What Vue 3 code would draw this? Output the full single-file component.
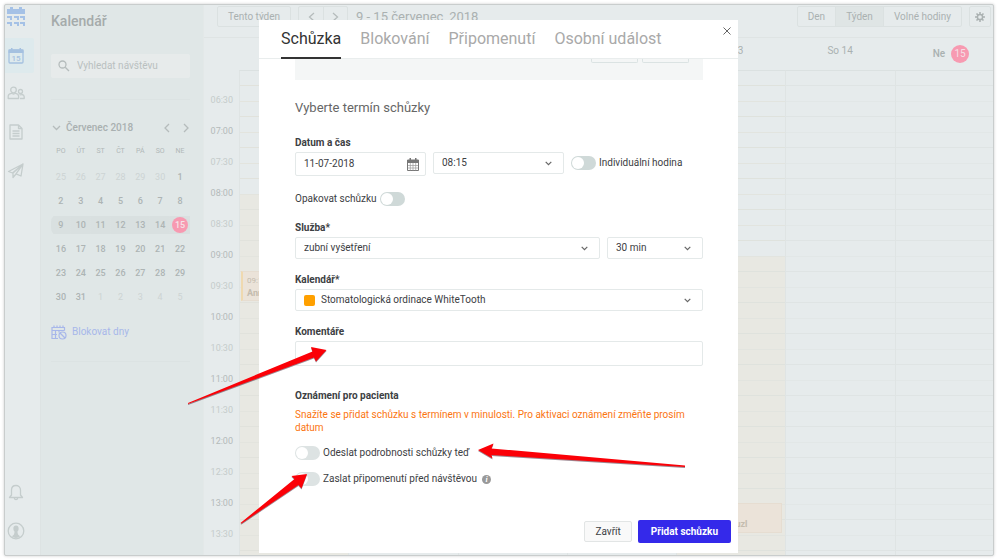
<script setup>
import { ref } from 'vue'

const weekdays = ['PO', 'ÚT', 'ST', 'ČT', 'PÁ', 'SO', 'NE']
const firstCell = new Date(2018, 5, 25)
const weeks = Array.from({ length: 6 }, (_, w) =>
  Array.from({ length: 7 }, (_, d) => {
    const date = new Date(firstCell)
    date.setDate(date.getDate() + w * 7 + d)
    return { day: date.getDate(), outside: date.getMonth() !== 6 }
  })
)

const times = Array.from({ length: 15 }, (_, i) => {
  const minutes = 390 + i * 30
  return {
    label: String(Math.floor(minutes / 60)).padStart(2, '0') + ':' + (minutes % 60 ? '30' : '00'),
    half: minutes % 60 !== 0
  }
})

const days = ['', '', '', '', 'Pá 13', 'So 14']
const tabs = ['Schůzka', 'Blokování', 'Připomenutí', 'Osobní událost']
const activeTab = ref('Schůzka')
const date = ref('11-07-2018')
const comment = ref('')
</script>

<template>
  <div class="page">
    <div class="frame">
      <nav class="rail" aria-label="Menu">
        <a href="#" class="logo" aria-label="Domů">
          <svg width="20" height="20" viewBox="0 0 20 20" fill="#a5c1e6">
            <path d="M1 2h3V0h3v2h6V0h3v2h3v5H1z" />
            <path d="M1 9h5v4H4v-2H1zM8 9h5v4h-2v-2H8zM14 9h5v4h-2v-2h-3zM1 15h5v4H4v-2H1zM8 15h5v4h-2v-2H8zM14 15h5v4h-2v-2h-3z" />
          </svg>
        </a>
        <a href="#" class="rail-item active" aria-label="Kalendář">
          <svg width="18" height="18" viewBox="0 0 18 18">
            <rect x="2" y="3" width="14" height="13" rx="1" fill="none" stroke="#a5c1e0" stroke-width="1.3" />
            <path d="M1.500 2.500h15V6h-15zM4 1h1.500v2H4zM12.500 1H14v2h-1.500z" fill="#a5c1e0" />
            <text x="9" y="14" text-anchor="middle" class="icon-num">15</text>
          </svg>
        </a>
        <a href="#" class="rail-item" aria-label="Klienti">
          <svg width="18" height="18" viewBox="0 0 18 18" class="line">
            <circle cx="6.500" cy="6" r="2.800" />
            <path d="M1.200 14.500v-2.300c0-1.800 1.600-2.600 3.200-2.900 1.200.8 3 .8 4.200 0 1.600.3 3 1.100 3 2.900v2.300z" />
            <circle cx="13.500" cy="7.500" r="2" />
            <path d="M13 14.500h4.200v-1.800c0-1.400-1-2-2.200-2.200-.8.500-1.600.5-2.500 0" />
          </svg>
        </a>
        <a href="#" class="rail-item" aria-label="Dokumenty">
          <svg width="18" height="18" viewBox="0 0 18 18" class="line">
            <path d="M3 2h8.500L15 5.500V16H3z" /><path d="M11.500 2v3.500H15M5.500 8h7M5.500 10.500h7M5.500 13h7" />
          </svg>
        </a>
        <a href="#" class="rail-item" aria-label="Zprávy">
          <svg width="18" height="18" viewBox="0 0 18 18" class="line">
            <path d="M16 2L1.500 9.500l4 1.500L16 2l-2 12-5-2.200L16 2 6 11v4.500L9 12" />
          </svg>
        </a>
        <span class="spacer"></span>
        <a href="#" class="rail-item" aria-label="Upozornění">
          <svg width="18" height="18" viewBox="0 0 18 18" class="line">
            <path d="M2.500 14.500h13l-2-2.500V7c0-6-9-6-9 0v5zM7.300 15c.3 2.200 3.100 2.200 3.400 0" />
          </svg>
        </a>
        <a href="#" class="rail-item last" aria-label="Profil">
          <svg width="18" height="18" viewBox="0 0 18 18">
            <circle cx="9" cy="9" r="7.800" fill="none" stroke="#c5cdcd" stroke-width="1.300" />
            <path d="M9 3.500c-2 0-2.800 1.500-2.600 3.400.1 1.400.7 2.200 1.200 2.900L7 12.500 5 14.300c2 2.300 6 2.300 8 0l-2-1.800-.6-2.700c.5-.7 1.100-1.500 1.200-2.900.2-1.900-.6-3.400-2.600-3.400z" fill="#c5cdcd" />
          </svg>
        </a>
      </nav>

      <aside class="sidebar">
        <h1>Kalendář</h1>
        <label class="search">
          <svg width="12" height="12" viewBox="0 0 12 12"><circle cx="4.500" cy="4.500" r="3.500" /><path d="M7.200 7.200L11 11" /></svg>
          <input type="search" placeholder="Vyhledat návštěvu" aria-label="Vyhledat návštěvu">
        </label>
        <hr>
        <div class="month">
          <svg width="9" height="6" viewBox="0 0 9 6"><path d="M1 1l3.500 3.500L8 1" /></svg>
          <strong>Červenec 2018</strong>
          <button aria-label="Předchozí měsíc"><svg width="6" height="10" viewBox="0 0 6 10"><path d="M5 1L1 5l4 4" /></svg></button>
          <button aria-label="Další měsíc"><svg width="6" height="10" viewBox="0 0 6 10"><path d="M1 1l4 4-4 4" /></svg></button>
        </div>
        <table class="mini">
          <thead><tr><th v-for="d in weekdays" :key="d">{{ d }}</th></tr></thead>
          <tbody>
            <tr v-for="(week, w) in weeks" :key="w" :class="{ current: w === 2 }">
              <td v-for="(c, i) in week" :key="i" :class="{ outside: c.outside }">
                <span :class="{ today: c.day === 15 }">{{ c.day }}</span>
              </td>
            </tr>
          </tbody>
        </table>
        <a href="#" class="block-days">
          <svg width="16" height="15" viewBox="0 0 16 15">
            <path d="M13.500 5.500V2.500H1v11h6M1 5.500h12.500M1 9.500h5M4.500 5.500v8M8 5.500v2M3 .5v2M6 .5v2M9 .5v2M12 .5v2" />
            <circle cx="11.500" cy="10.500" r="3.500" /><path d="M9 8l5 5" />
          </svg>
          Blokovat dny
        </a>
        <hr>
      </aside>

      <main class="main">
        <header class="toolbar">
          <button class="ghost">Tento týden</button>
          <div class="group">
            <button aria-label="Předchozí týden"><svg width="7" height="10" viewBox="0 0 7 10"><path d="M6 1L1.500 5 6 9" /></svg></button>
            <button aria-label="Další týden"><svg width="7" height="10" viewBox="0 0 7 10"><path d="M1 1l4.500 4L1 9" /></svg></button>
          </div>
          <span class="range">9 - 15 červenec, 2018</span>
          <div class="group views">
            <button>Den</button><button class="on">Týden</button><button>Volné hodiny</button>
          </div>
          <button class="ghost gear" aria-label="Nastavení">
            <svg width="10" height="10" viewBox="0 0 10 10"><circle cx="5" cy="5" r="2.600" /><path d="M5 0v2M5 8v2M0 5h2M8 5h2M1.500 1.500l1.400 1.400M7.100 7.100l1.400 1.400M1.500 8.500l1.400-1.400M7.100 2.900l1.400-1.400" /></svg>
          </button>
        </header>
        <div class="day-heads">
          <span></span>
          <span v-for="(d, i) in days" :key="i" class="day-head">{{ d }}</span>
          <span class="day-head now">Ne <b>15</b></span>
        </div>
        <div class="schedule">
          <div class="times">
            <span v-for="t in times" :key="t.label" :class="{ half: t.half }">{{ t.label }}</span>
          </div>
          <div class="col open-eight">
            <div class="event first"><span>09:15</span><strong>Anna</strong></div>
          </div>
          <div class="col"></div>
          <div class="col"></div>
          <div class="col"></div>
          <div class="col open-ten">
            <div class="event second"><strong>Kuzl</strong></div>
          </div>
          <div class="col"></div>
          <div class="col"></div>
        </div>
      </main>
    </div>

    <div class="overlay">
      <section class="dialog" role="dialog" aria-label="Schůzka">
        <header class="tabs">
          <button v-for="t in tabs" :key="t" :class="{ active: t === activeTab }" @click="activeTab = t">{{ t }}</button>
          <button class="close" aria-label="Zavřít okno">
            <svg width="8" height="8" viewBox="0 0 8 8"><path d="M.5.5l7 7M7.500.5l-7 7" /></svg>
          </button>
        </header>

        <form class="form" @submit.prevent>
          <div class="client"><span></span><span></span></div>
          <h2>Vyberte termín schůzky</h2>

          <label class="title" for="date">Datum a čas</label>
          <div class="row when">
            <div class="field date">
              <input id="date" v-model="date" type="text">
              <svg width="12" height="13" viewBox="0 0 12 13">
                <path d="M.5 2h11v10.500H.5z" fill="none" stroke="#777" /><path d="M0 2h12v3H0zM2.500 0h1.500v2H2.500zM8 0h1.500v2H8z" fill="#777" />
                <path d="M1 7.500h10M1 10h10M3.300 5v7.500M6 5v7.500M8.700 5v7.500" stroke="#999" stroke-width=".7" />
              </svg>
            </div>
            <div class="field">
              <select aria-label="Čas"><option>08:15</option></select>
              <svg class="chev" width="7" height="5" viewBox="0 0 7 5"><path d="M.7.8l2.800 2.800L6.300.8" /></svg>
            </div>
            <label class="switch"><input type="checkbox">Individuální hodina</label>
          </div>

          <label class="switch repeat">Opakovat schůzku<input type="checkbox"></label>

          <label class="title" for="service">Služba*</label>
          <div class="row what">
            <div class="field">
              <select id="service"><option>zubní vyšetření</option></select>
              <svg class="chev" width="7" height="5" viewBox="0 0 7 5"><path d="M.7.8l2.800 2.800L6.300.8" /></svg>
            </div>
            <div class="field">
              <select aria-label="Délka"><option>30 min</option></select>
              <svg class="chev" width="7" height="5" viewBox="0 0 7 5"><path d="M.7.8l2.800 2.800L6.300.8" /></svg>
            </div>
          </div>

          <label class="title next" for="calendar">Kalendář*</label>
          <div class="field">
            <i class="swatch"></i>
            <select id="calendar"><option>Stomatologická ordinace WhiteTooth</option></select>
            <svg class="chev" width="7" height="5" viewBox="0 0 7 5"><path d="M.7.8l2.800 2.800L6.300.8" /></svg>
          </div>

          <label class="title next" for="comment">Komentáře</label>
          <div class="field comment"><input id="comment" v-model="comment" type="text"></div>

          <h3>Oznámení pro pacienta</h3>
          <p class="warning">Snažíte se přidat schůzku s termínem v minulosti. Pro aktivaci oznámení změňte prosím datum</p>
          <label class="switch notify"><input type="checkbox">Odeslat podrobnosti schůzky teď</label>
          <label class="switch notify"><input type="checkbox">Zaslat připomenutí před návštěvou
            <i class="info">i</i>
          </label>
        </form>

        <footer class="actions">
          <button class="cancel">Zavřít</button>
          <button class="submit">Přidat schůzku</button>
        </footer>
      </section>
    </div>

    <svg class="arrows" width="998" height="560" viewBox="0 0 998 560" aria-hidden="true">
      <path d="M188 403L312.500 351.500 311 347 326.500 350 316 361.500 314 357.500 188 404z" />
      <path d="M685 467L491.500 455 492.500 458.500 478 450 493.500 443.500 491.500 448.500 685 465.500z" />
      <path d="M240.500 523L294.500 479 291.500 476 307 474 301.500 488.500 298.500 485 241.500 523.500z" />
    </svg>
  </div>
</template>

<style>
body { background: #fff; }
</style>

<style scoped>
* { box-sizing: border-box; }
button, input, select { font: inherit; color: inherit; margin: 0; padding: 0; border: 0; background: none; outline: 0; }
a { color: inherit; text-decoration: none; }
svg { display: block; flex: none; }

.page {
  position: relative;
  height: 100vh;
  padding: 4px;
  font: 10px/12px Roboto, "Liberation Sans", sans-serif;
  color: #3c4043;
  overflow: hidden;
}
.frame {
  display: grid;
  grid-template-columns: 35px 164px minmax(0, 1fr);
  height: 100%;
  border: 1px solid #c9cdcd;
  border-radius: 2px;
  box-shadow: 0 0 3px #ccc;
  background: #e6ebec;
  overflow: hidden;
}

.rail { display: flex; flex-direction: column; }
.logo { padding: 2px 0 0 1px; height: 33px; }
.rail-item { display: flex; align-items: center; height: 39px; padding-left: 2px; }
.rail-item.active { height: 35px; width: 29px; background: #deeaed; border-radius: 0 2px 2px 0; }
.rail-item.last { margin-bottom: 5px; }
.spacer { flex: 1; }
.line { fill: none; stroke: #c5cdcd; stroke-width: 1.3; stroke-linejoin: round; }
.icon-num { font-size: 8px; font-weight: 500; fill: #a5c1e0; }

.sidebar { padding: 8px 13px 0 10px; background: #e0e7e7; border-left: 1px solid #dde3e3; border-right: 1px solid #e3e8e8; }
.sidebar h1 { margin: 0 0 25px; font-size: 14px; line-height: 16px; font-weight: 500; color: #a5abab; }
.search { display: flex; align-items: center; gap: 7px; height: 24px; padding: 0 7px; background: #e7ebeb; border-radius: 2px; }
.search svg, .month svg, .group svg { fill: none; stroke: #b5bcbc; stroke-width: 1.3; }
.search input { width: 100%; min-width: 0; color: #b9c0c0; }
.search input::placeholder { color: #b9c0c0; opacity: 1; }
.sidebar hr { margin: 21px 0; border: 0; border-top: 1px solid #dce3e3; }
.month { display: flex; align-items: center; gap: 5px; height: 14px; padding-left: 1px; color: #a9b0b0; }
.month strong { flex: 1; font-weight: 500; }
.month button { display: flex; justify-content: center; width: 14px; }
.month button + button { margin-right: -3px; }
.mini { width: 100%; margin-top: 6px; border-collapse: collapse; table-layout: fixed; text-align: center; }
.mini th { height: 24px; padding: 0 0 4px; font-size: 7px; font-weight: 400; color: #b1b8b8; }
.mini td { height: 24px; padding: 0; font-size: 9px; font-weight: 500; color: #adb4b4; }
.mini td.outside { font-weight: 400; color: #cdd4d4; }
.mini .current td { background: linear-gradient(#d9e0e0, #d9e0e0) center / 100% 18px no-repeat; }
.mini .current td:first-child { border-radius: 9px 0 0 9px; }
.mini .today { display: inline-block; width: 16px; height: 16px; line-height: 16px; border-radius: 50%; background: #f79ab1; color: #f5e3e8; }
.block-days { display: flex; align-items: center; gap: 5px; height: 16px; margin-top: 15px; color: #a7b7ea; }
.block-days svg { fill: none; stroke: #a7b7ea; stroke-width: 1.2; }

.main { display: flex; flex-direction: column; min-width: 0; color: #aab1b1; }
.toolbar { display: flex; align-items: flex-start; height: 33px; padding: 1px 2px 0 13px; border-bottom: 1px solid #dfe4e4; }
.ghost, .group { display: flex; align-items: center; justify-content: center; height: 21px; border: 1px solid #dbe1e1; border-radius: 2px; }
.toolbar > .ghost:first-child { width: 74px; }
.group { margin-left: 7px; overflow: hidden; }
.group button { display: flex; align-items: center; justify-content: center; height: 100%; width: 24px; }
.group button + button { border-left: 1px solid #dbe1e1; }
.range { margin-left: 8px; font-size: 13px; line-height: 22px; white-space: nowrap; }
.views { margin-left: auto; }
.views button { width: auto; padding: 0 10px; }
.views button.on { background: #dfe5e5; }
.gear { width: 22px; margin-left: 7px; }
.gear svg { fill: none; stroke: #aab1b1; stroke-width: 1.5; }

.day-heads, .schedule { display: grid; grid-template-columns: 35px repeat(6, minmax(0, 109fr)) minmax(0, 98fr); }
.day-heads { height: 32px; }
.day-head { padding-top: 7px; text-align: center; }
.day-head.now { display: flex; align-items: center; justify-content: center; gap: 6px; padding: 0 0 0 14px; font-weight: 500; }
.day-head b { width: 18px; height: 18px; line-height: 18px; font-weight: 400; border-radius: 50%; background: #f79ab1; color: #f5dfe5; }
.schedule { flex: 1; min-height: 0; overflow: hidden; }
.times { display: flex; flex-direction: column; padding: 15px 6px 0 0; font-size: 9px; text-align: right; color: #b4baba; }
.times span { flex: none; height: 31px; line-height: 31px; }
.times .half { color: #c5cbcb; }
.col {
  border-left: 1px solid #dfe4e4;
  border-top: 1px solid #dbe1e1;
  background: repeating-linear-gradient(transparent 0 14px, #dfe4e4 14px 15px, transparent 15px 30px, #e2e7e7 30px 31px);
}
.open-eight { background: repeating-linear-gradient(transparent 0 14px, #e1e2dc 14px 15px, transparent 15px 30px, #e3e4de 30px 31px), linear-gradient(#e6ebec 123px, #e8e8e2 123px); }
.open-ten { background: repeating-linear-gradient(transparent 0 14px, #dfe2dd 14px 15px, transparent 15px 30px, #e2e4df 30px 31px), linear-gradient(#e6ebec 185px, #e8e8e2 185px); }
.event { display: flex; flex-direction: column; height: 30px; overflow: hidden; background: #ebe3d9; border: 1px solid #e6ddd1; font-size: 8px; color: #c4bcae; white-space: nowrap; }
.event strong { font-size: 9px; font-weight: 700; }
.first { margin: 200px 3px 0 1px; padding: 3px 4px; border-left: 2px solid #efd9b0; }
.second { margin: 432px 3px 0 0; padding: 14px 34px 0 0; text-align: right; }

.overlay { position: absolute; inset: 20px 0 7px; display: flex; justify-content: center; padding-right: 1px; }
.dialog { display: flex; flex-direction: column; width: 100%; max-width: 479px; background: #fff; overflow: hidden; }
.tabs { display: flex; flex: none; gap: 19px; height: 39px; padding: 0 7px 0 22px; border-bottom: 1px solid #e9eded; font-size: 16px; line-height: 20px; color: #a9a9a9; }
.tabs button { height: 39px; white-space: nowrap; border-bottom: 2px solid transparent; }
.tabs .active { color: #333; border-color: #333; }
.tabs .close { height: 21px; margin-left: auto; border: 0; }
.close svg { stroke: #666; fill: none; }

.form { flex: 1; min-height: 0; padding: 0 35px 0 36px; overflow: hidden; }
.client { display: flex; justify-content: flex-end; gap: 4px; height: 21px; padding-right: 14px; background: #f4f6f6; }
.client span { width: 47px; height: 4px; border: 1px solid #dbe3e3; border-top: 0; border-radius: 0 0 2px 2px; }
.form h2 { margin: 20px 0 21px; font-size: 13px; line-height: 16px; font-weight: 400; color: #666; }
.title { display: block; height: 12px; margin-bottom: 3px; font-weight: 700; }
.title.next { margin-top: 15px; }
.row { display: grid; align-items: start; gap: 7px; }
.when { grid-template-columns: minmax(0, 131fr) minmax(0, 131fr) minmax(0, 132fr); }
.what { grid-template-columns: minmax(0, 305fr) minmax(0, 96fr); }
.field { display: flex; align-items: center; height: 22px; padding: 0 11px 0 8px; border: 1px solid #e4e9e9; border-radius: 2px; }
.field input, .field select { flex: 1; min-width: 0; width: 100%; appearance: none; }
.date { height: 24px; padding-right: 6px; }
.chev { fill: none; stroke: #666; stroke-width: 1.2; }
.switch { display: flex; align-items: center; gap: 3px; height: 14px; white-space: nowrap; }
.row .switch { margin-top: 4px; }
.switch input { flex: none; width: 25px; height: 14px; appearance: none; border-radius: 7px; background: #cfd9d8; }
.switch input::before { content: ""; display: block; width: 12px; height: 12px; margin: 1px; border-radius: 50%; background: #fff; }
.repeat { margin: 16px 0; }
.swatch { flex: none; width: 11px; height: 11px; margin-right: 6px; border-radius: 2px; background: #ffa000; }
.comment { height: 25px; }
.form h3 { margin: 24px 0 6px; font-size: 10px; line-height: 12px; font-weight: 700; }
.warning { margin: 0 0 12px; line-height: 13px; color: #fb7510; }
.notify { margin-bottom: 12px; }
.notify input { background: #dde3e3; }
.info { display: inline-block; width: 9px; height: 9px; margin-left: 2px; border-radius: 50%; background: #999; color: #fff; font: italic 700 8px/9px "Liberation Serif", serif; text-align: center; }

.actions { display: flex; flex: none; align-items: center; justify-content: flex-end; gap: 6px; height: 43px; padding-right: 7px; }
.cancel { height: 21px; padding: 0 10px; border: 1px solid #e2e5e5; border-radius: 2px; background: #f9f9f9; }
.submit { height: 23px; padding: 0 13px; border-radius: 2px; background: #3429ea; color: #fff; font-weight: 700; }

.arrows { position: absolute; top: 0; left: 0; fill: #fb0007; filter: drop-shadow(0 1px 0 rgba(60, 20, 40, 0.5)); pointer-events: none; }
</style>
